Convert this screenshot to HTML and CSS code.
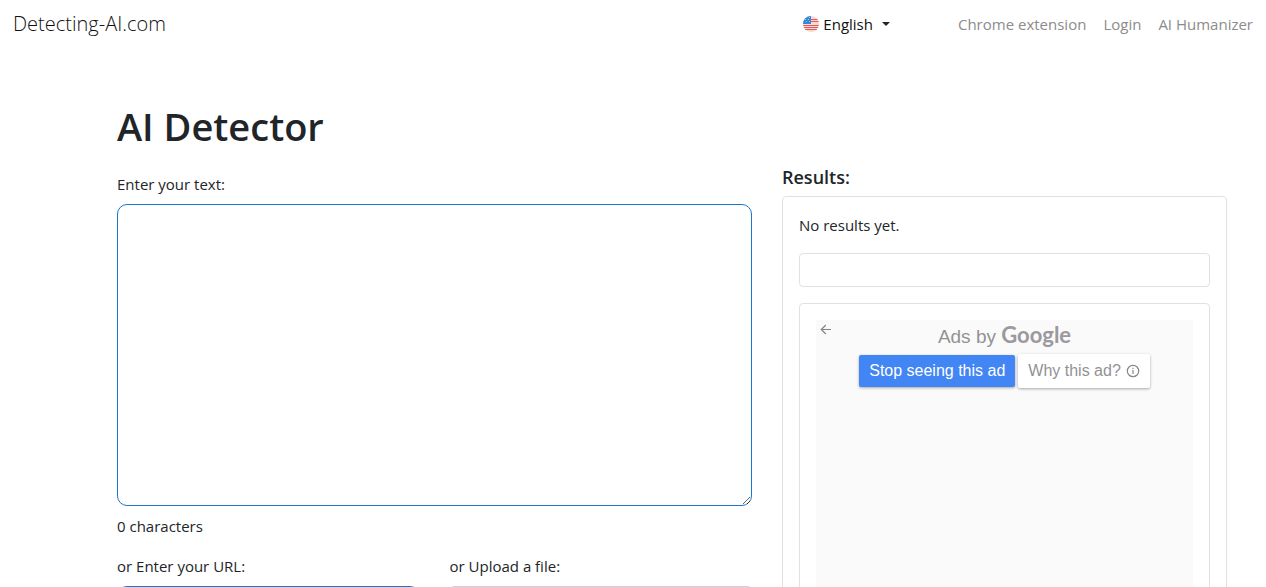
FILE: index.html
```html
<!DOCTYPE html>
<html lang="en">
<head>
<meta charset="utf-8">
<meta name="viewport" content="width=device-width, initial-scale=1">
<title>AI Detector</title>
<link rel="stylesheet" href="styles.css">
</head>
<body>
<header class="navbar">
  <a class="brand" href="#">Detecting-AI.com</a>
  <button class="language" type="button" aria-haspopup="true">
    <svg class="flag" viewBox="0 0 16 16" aria-hidden="true">
      <defs><clipPath id="disc"><circle cx="8" cy="8" r="8"/></clipPath></defs>
      <g clip-path="url(#disc)">
        <path fill="#f3dccb" d="M0 0h16v16H0z"/>
        <path fill="#ec5565" d="M8 3h8v1H8zM8 5h8v1H8zM0 9h16v1H0zM0 11h16v1H0zM0 13h16v1H0z"/>
        <path fill="#2f8ad8" d="M0 0h8v8H0z"/>
        <path fill="#8cc4ee" d="M2 3h1v1H2zM5 3h1v1H5zM3 5h1v1H3zM6 5h1v1H6zM6 1h1v1H6z"/>
      </g>
    </svg>
    <span>English</span>
    <span class="caret"></span>
  </button>
  <nav class="links">
    <a href="#">Chrome extension</a>
    <a href="#">Login</a>
    <a href="#">AI Humanizer</a>
  </nav>
</header>
<main class="content">
  <form class="detector">
    <h1>AI Detector</h1>
    <label class="text-label" for="text">Enter your text:</label>
    <textarea class="text-box" id="text"></textarea>
    <p class="count">0 characters</p>
    <div class="sources">
      <div class="source">
        <label for="url">or Enter your URL:</label>
        <input class="url-box" id="url" type="url">
      </div>
      <div class="source">
        <label for="file">or Upload a file:</label>
        <input class="file-box" id="file" type="file">
      </div>
    </div>
  </form>
  <section class="results">
    <h2>Results:</h2>
    <div class="panel outer">
      <p class="status">No results yet.</p>
      <div class="panel summary"></div>
      <div class="panel ad-frame">
        <div class="ad">
          <button class="back" type="button" aria-label="Back">
            <svg viewBox="0 0 12 12" aria-hidden="true"><path d="M11 5.5H1.5M5.8 1 1.3 5.5 5.8 10" fill="none" stroke="#858589" stroke-width="1.2"/></svg>
          </button>
          <div class="ad-title">Ads by <span class="google">Google</span></div>
          <div class="ad-actions">
            <button class="stop" type="button">Stop seeing this ad</button>
            <button class="why" type="button">Why this ad?
              <svg viewBox="0 0 14 14" aria-hidden="true"><circle cx="7" cy="7" r="5.7" fill="none" stroke="#88888c" stroke-width="1.2"/><path d="M6.4 6h1.2v4H6.4zM6.4 3.8h1.2V5H6.4z" fill="#88888c"/></svg>
            </button>
          </div>
        </div>
      </div>
    </div>
  </section>
</main>
</body>
</html>
```
FILE: styles.css
```css
* {
  box-sizing: border-box;
}

body {
  display: flex;
  flex-direction: column;
  height: 100vh;
  margin: 0;
  overflow: hidden;
  background: #fff;
  color: #212529;
  font: 15px/24px "Open Sans", "Noto Sans", sans-serif;
}

a {
  color: inherit;
  text-decoration: none;
}

button {
  padding: 0;
  border: 0;
  background: none;
  cursor: pointer;
}

h1,
h2,
p {
  margin: 0;
}

.navbar {
  display: flex;
  align-items: center;
  padding: 9px 13px 11px;
}

.brand {
  margin-right: auto;
  color: #111;
  font-size: 20px;
  font-weight: 300;
  line-height: 30px;
}

.language {
  display: flex;
  align-items: center;
  gap: 4px;
  margin-right: 68px;
  color: #111;
  font: inherit;
}

.flag {
  width: 16px;
  height: 16px;
}

.caret {
  margin-left: 5px;
  border: 4px solid transparent;
  border-top-color: #212529;
  border-bottom: 0;
}

.links {
  display: flex;
  gap: 17px;
  color: #8c8c8c;
}

.content {
  display: grid;
  flex: 1;
  grid-template-columns: 635fr 445fr;
  align-items: start;
  gap: 30px;
  min-height: 0;
  padding: 52px 39px 0 117px;
}

.detector {
  display: flex;
  flex-direction: column;
}

h1 {
  margin-bottom: 22px;
  font-size: 38px;
  font-weight: 600;
  line-height: 48px;
}

.text-label {
  margin-bottom: 8px;
}

.text-box {
  height: 302px;
  border: 1px solid #1c76c9;
  border-radius: 10px;
  outline: 0;
  padding: 8px 12px;
  font: inherit;
}

.count {
  padding: 8px 0 16px;
}

.sources {
  display: grid;
  grid-template-columns: 1fr 1fr;
  gap: 30px;
}

.source {
  display: flex;
  flex-direction: column;
  gap: 8px;
  min-width: 0;
}

.url-box,
.file-box {
  width: 100%;
  height: 38px;
  border: 1px solid #1c76c9;
  border-radius: 10px;
  padding: 6px 12px;
  font: inherit;
}

.file-box {
  border-color: #ced4da;
  border-radius: 4px;
}

.results {
  padding-top: 63px;
}

h2 {
  margin-bottom: 7px;
  font-size: 18px;
  font-weight: 600;
  line-height: 24px;
}

.panel {
  border: 1px solid #dee2e6;
  border-radius: 4px;
}

.outer {
  display: flex;
  flex-direction: column;
  gap: 16px;
  padding: 16px;
}

.summary {
  height: 34px;
}

.ad-frame {
  padding: 16px;
}

.ad {
  position: relative;
  min-height: 314px;
  padding-top: 4px;
  background: #fafafa;
  color: #929296;
  font-family: "Liberation Sans", Arial, sans-serif;
}

.back {
  position: absolute;
  top: 4px;
  left: 4px;
  width: 12px;
  height: 12px;
}

.back svg {
  display: block;
}

.ad-title {
  height: 24px;
  font-size: 19px;
  line-height: 22px;
  text-align: center;
}

.google {
  color: #9c999e;
  font-family: Lato, sans-serif;
  font-size: 22px;
  font-weight: 700;
}

.ad-actions {
  display: flex;
  align-items: center;
  justify-content: center;
  gap: 3px;
  padding-top: 6px;
}

.stop,
.why {
  display: flex;
  align-items: center;
  gap: 5px;
  height: 34px;
  padding: 0 10px;
  border-radius: 2px;
  background: #fff;
  box-shadow: 0 1px 3px #0005;
  color: inherit;
  font: 16px/20px "Liberation Sans", Arial, sans-serif;
  white-space: nowrap;
}

.stop {
  height: 32px;
  background: #4285f4;
  color: #fff;
}

.why svg {
  width: 14px;
  height: 14px;
}
```
